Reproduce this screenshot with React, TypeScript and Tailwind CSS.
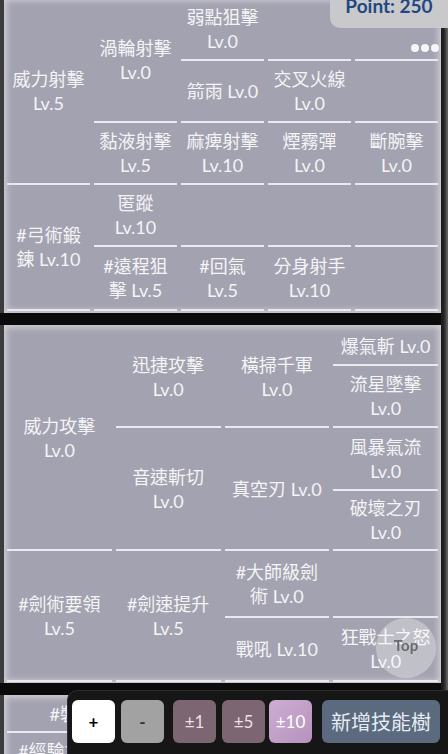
import React from 'react';

interface Cell {
  pos: string;
  lines: string[];
}

// 弓術 tree
const bowCells: Cell[] = [
  { pos: 'col-start-1 row-start-1 row-span-3', lines: ['威力射擊', 'Lv.5'] },
  { pos: 'col-start-2 row-start-1 row-span-2', lines: ['渦輪射擊', 'Lv.0'] },
  { pos: 'col-start-3 row-start-1', lines: ['弱點狙擊', 'Lv.0'] },
  { pos: 'col-start-4 row-start-1', lines: [] },
  { pos: 'col-start-5 row-start-1', lines: [] },
  { pos: 'col-start-3 row-start-2', lines: ['箭雨 Lv.0'] },
  { pos: 'col-start-4 row-start-2', lines: ['交叉火線', 'Lv.0'] },
  { pos: 'col-start-5 row-start-2', lines: [] },
  { pos: 'col-start-2 row-start-3', lines: ['黏液射擊', 'Lv.5'] },
  { pos: 'col-start-3 row-start-3', lines: ['麻痺射擊', 'Lv.10'] },
  { pos: 'col-start-4 row-start-3', lines: ['煙霧彈', 'Lv.0'] },
  { pos: 'col-start-5 row-start-3', lines: ['斷腕擊', 'Lv.0'] },
  { pos: 'col-start-1 row-start-4 row-span-2', lines: ['#弓術鍛', '鍊 Lv.10'] },
  { pos: 'col-start-2 row-start-4', lines: ['匿蹤', 'Lv.10'] },
  { pos: 'col-start-3 row-start-4', lines: [] },
  { pos: 'col-start-4 row-start-4', lines: [] },
  { pos: 'col-start-5 row-start-4', lines: [] },
  { pos: 'col-start-2 row-start-5', lines: ['#遠程狙', '擊 Lv.5'] },
  { pos: 'col-start-3 row-start-5', lines: ['#回氣', 'Lv.5'] },
  { pos: 'col-start-4 row-start-5', lines: ['分身射手', 'Lv.10'] },
  { pos: 'col-start-5 row-start-5', lines: [] },
];

// 劍術 tree
const swordCells: Cell[] = [
  { pos: 'col-start-1 row-start-1 row-span-4', lines: ['威力攻擊', 'Lv.0'] },
  { pos: 'col-start-2 row-start-1 row-span-2', lines: ['迅捷攻擊', 'Lv.0'] },
  { pos: 'col-start-3 row-start-1 row-span-2', lines: ['橫掃千軍', 'Lv.0'] },
  { pos: 'col-start-4 row-start-1', lines: ['爆氣斬 Lv.0'] },
  { pos: 'col-start-4 row-start-2', lines: ['流星墜擊', 'Lv.0'] },
  { pos: 'col-start-2 row-start-3 row-span-2', lines: ['音速斬切', 'Lv.0'] },
  { pos: 'col-start-3 row-start-3 row-span-2', lines: ['真空刃 Lv.0'] },
  { pos: 'col-start-4 row-start-3', lines: ['風暴氣流', 'Lv.0'] },
  { pos: 'col-start-4 row-start-4', lines: ['破壞之刃', 'Lv.0'] },
  { pos: 'col-start-1 row-start-5 row-span-2', lines: ['#劍術要領', 'Lv.5'] },
  { pos: 'col-start-2 row-start-5 row-span-2', lines: ['#劍速提升', 'Lv.5'] },
  { pos: 'col-start-3 row-start-5', lines: ['#大師級劍', '術 Lv.0'] },
  { pos: 'col-start-4 row-start-5', lines: [] },
  { pos: 'col-start-3 row-start-6', lines: ['戰吼 Lv.10'] },
  { pos: 'col-start-4 row-start-6', lines: ['狂戰士之怒', 'Lv.0'] },
];

const extraCells: Cell[] = [
  { pos: 'col-start-1 row-start-1 col-span-2', lines: ['#裝甲精通 Lv.10'] },
  { pos: 'col-start-3 row-start-1', lines: [] },
  { pos: 'col-start-4 row-start-1', lines: [] },
  { pos: 'col-start-1 row-start-2', lines: ['#經驗加成', 'Lv.0'] },
  { pos: 'col-start-2 row-start-2', lines: ['#採集', 'Lv.0'] },
  { pos: 'col-start-3 row-start-2', lines: [] },
  { pos: 'col-start-4 row-start-2', lines: [] },
];

const font = { fontFamily: 'Lato, "Noto Sans CJK TC", sans-serif' };

const SkillCell = ({ cell }: { cell: Cell }) => (
  <div
    className={`${cell.pos} flex flex-col items-center justify-center border-b-2 border-[#e9e9ef] text-center text-[18px] leading-[24px] text-[#f4f4f7]`}
  >
    {cell.lines.map((l, i) => (
      <span key={i} className="whitespace-nowrap">{l}</span>
    ))}
  </div>
);

const panelCls =
  'relative bg-[#a3a2b0] border-l-4 border-[#3c3c3c] px-[3px] shadow-[inset_0_0_7px_2px_rgba(255,255,255,0.55)]';

const App = () => {
  return (
    <div className="min-h-screen bg-[#0b0b0b] flex" style={font}>
      <div className="w-[441px] shrink-0 flex flex-col gap-[12px]">
        <div className={`${panelCls} -mt-[2px] pb-[2px]`}>
          <div className="grid grid-cols-5 gap-x-1 grid-rows-[63px_62px_62px_62px_64px]">
            {bowCells.map((c, i) => (
              <SkillCell key={i} cell={c} />
            ))}
          </div>
          <div className="absolute right-[2px] top-[46px] flex gap-[2px]">
            <span className="w-[8px] h-[8px] rounded-full bg-[#f6f6f8]" />
            <span className="w-[8px] h-[8px] rounded-full bg-[#f6f6f8]" />
            <span className="w-[8px] h-[8px] rounded-full bg-[#f6f6f8]" />
          </div>
        </div>

        <div className={`${panelCls} pt-[2px] pb-[1px]`}>
          <div className="grid grid-cols-4 gap-x-1 grid-rows-[39px_62px_63px_60px_67px_64px]">
            {swordCells.map((c, i) => (
              <SkillCell key={i} cell={c} />
            ))}
          </div>
        </div>

        <div className={`${panelCls} pt-[2px] pb-[2px]`}>
          <div className="grid grid-cols-4 gap-x-1 grid-rows-[36px_62px]">
            {extraCells.map((c, i) => (
              <SkillCell key={i} cell={c} />
            ))}
          </div>
        </div>
      </div>
      <div className="w-[7px] shrink-0 bg-[linear-gradient(to_right,#1c1c1c,#222222_40%,#6a6a6a)]" />

      {/* point badge */}
      <div className="fixed top-[-6px] right-0 w-[118px] h-[34px] rounded-bl-[10px] bg-[#c9c9cc] flex justify-center">
        <span className="text-[19px] leading-[24px] font-bold text-[#1f4882]">Point: 250</span>
      </div>

      {/* back to top */}
      <div className="fixed left-[376px] top-[618px] w-[60px] h-[60px] rounded-full bg-[rgba(255,255,255,0.32)] flex items-center justify-center">
        <span className="text-[15px] font-bold text-[#6a6a6e] -mt-[6px]">Top</span>
      </div>

      {/* toolbar */}
      <div className="fixed bottom-0 left-[67px] right-0 h-[64px] rounded-tl-[10px] bg-[#161616] border-t border-l border-[#2c2c2c] flex items-start pt-[9px] pl-[4px]">
        <button className="w-[43px] h-[43px] rounded-[6px] bg-white text-black text-[17px] font-bold">+</button>
        <button className="ml-[6px] w-[43px] h-[43px] rounded-[6px] bg-[#a2a2a2] text-[#333] text-[17px] font-bold">-</button>
        <button className="ml-[9px] w-[43px] h-[43px] rounded-[6px] bg-[#7b6672] text-[#ecdfe6] text-[17px]">±1</button>
        <button className="ml-[6px] w-[43px] h-[43px] rounded-[6px] bg-[#7b6672] text-[#ecdfe6] text-[17px]">±5</button>
        <button className="ml-[4px] w-[43px] h-[43px] rounded-[6px] bg-[linear-gradient(135deg,#cdaed3,#b692bc)] text-white text-[17px]">±10</button>
        <button className="ml-[10px] w-[118px] h-[43px] rounded-[6px] bg-[#5b6a7e] text-[#e6edf4] text-[20px]">新增技能樹</button>
      </div>
    </div>
  );
};

export default App;
